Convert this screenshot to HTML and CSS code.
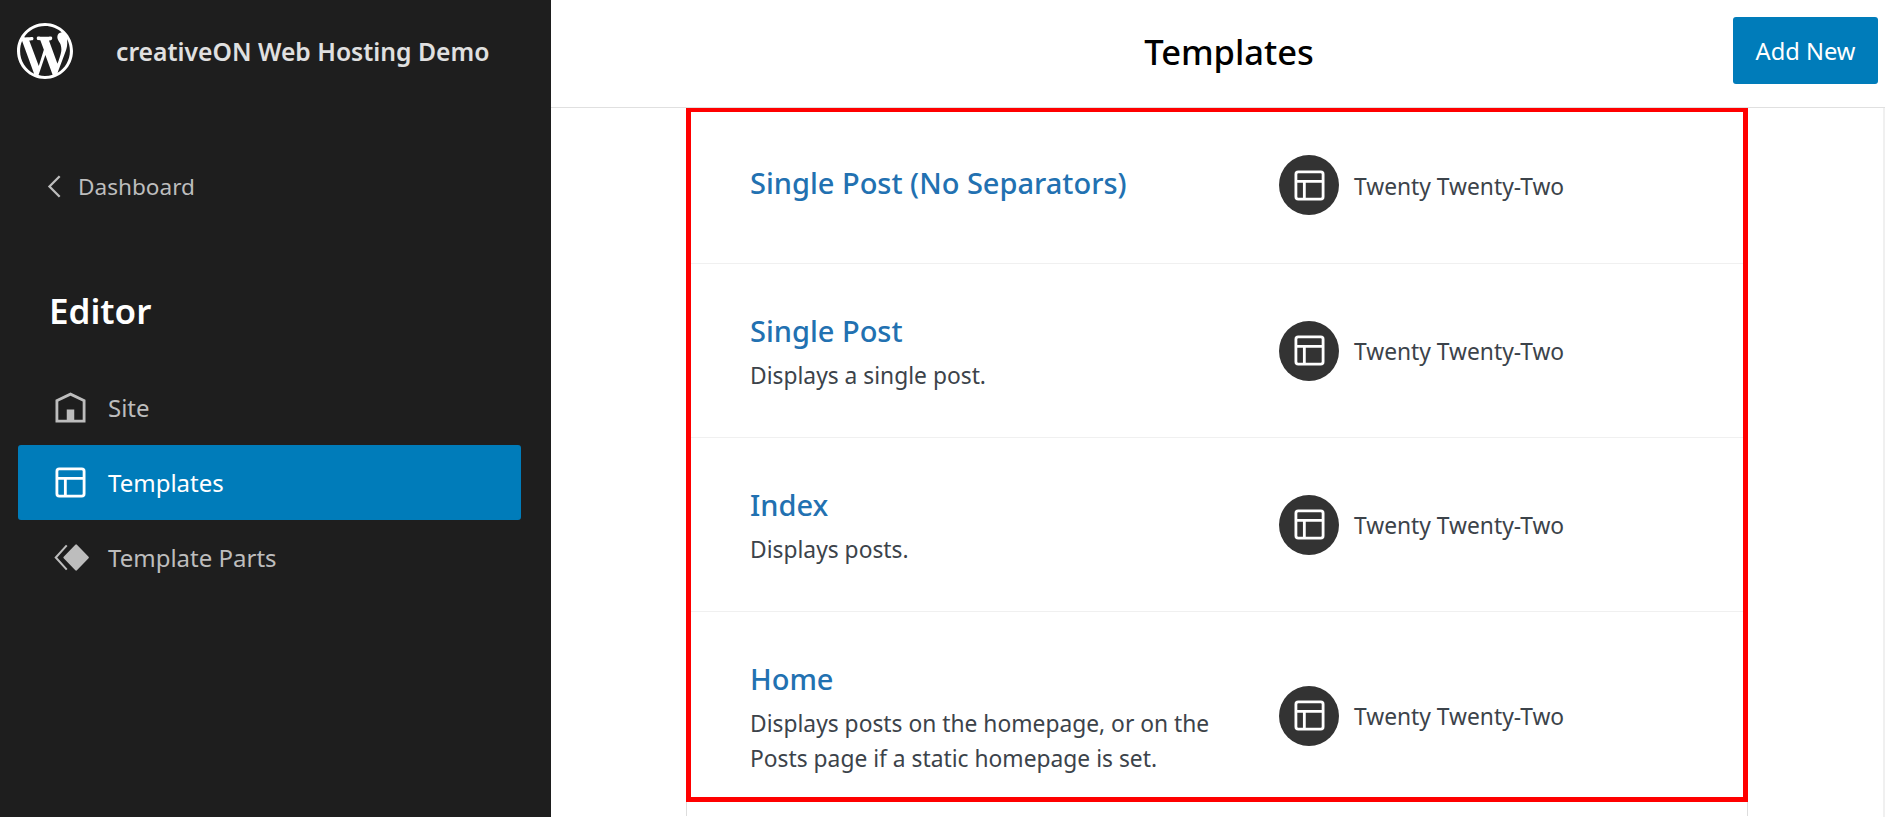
FILE: index.html
```html
<!DOCTYPE html>
<html lang="en">
<head>
    <meta charset="UTF-8">
    <meta name="viewport" content="width=device-width, initial-scale=1.0">
    <title>Templates</title>
    <link rel="stylesheet" href="styles.css">
</head>
<body>
    <svg class="icon-defs" width="0" height="0">
        <symbol id="icon-layout" viewBox="0 0 24 24">
            <path d="M18 5.5H6a.5.5 0 00-.5.5v3h13V6a.5.5 0 00-.5-.5zm.5 5H10v8h8a.5.5 0 00.5-.5v-7.5zm-10 0h-3V18a.5.5 0 00.5.5h2.5v-8zM6 4h12a2 2 0 012 2v12a2 2 0 01-2 2H6a2 2 0 01-2-2V6a2 2 0 012-2z"/>
        </symbol>
    </svg>

    <div class="app">
        <aside class="sidebar">
            <div class="site-head">
                <svg class="wp-logo" viewBox="0 0 20 20"><path d="M20 10c0-5.51-4.49-10-10-10C4.48 0 0 4.49 0 10c0 5.52 4.48 10 10 10 5.51 0 10-4.48 10-10zM7.78 15.37L4.37 6.22c.55-.02 1.17-.08 1.17-.08.5-.06.44-1.13-.06-1.11 0 0-1.45.11-2.37.11-.18 0-.37 0-.58-.01C4.12 2.69 6.87 1.11 10 1.11c2.33 0 4.45.87 6.05 2.34-.68-.11-1.65.39-1.65 1.58 0 .74.45 1.36.9 2.1.35.61.55 1.36.55 2.46 0 1.49-1.4 5-1.4 5l-3.03-8.37c.54-.02.82-.17.82-.17.5-.05.44-1.25-.06-1.22 0 0-1.44.12-2.38.12-.87 0-2.33-.12-2.33-.12-.5-.03-.56 1.2-.06 1.22l.92.08 1.26 3.41zM17.41 10c.24-.64.74-1.87.43-4.25.7 1.29 1.05 2.71 1.05 4.25 0 3.29-1.73 6.24-4.4 7.78.97-2.59 1.94-5.2 2.92-7.78zM6.1 18.09C3.12 16.65 1.11 13.53 1.11 10c0-1.3.23-2.48.72-3.59C3.25 10.3 4.67 14.2 6.1 18.09zm4.03-6.63l2.58 6.98c-.86.29-1.76.45-2.71.45-.79 0-1.57-.11-2.29-.33.81-2.38 1.62-4.74 2.42-7.1z"/></svg>
                <span class="site-name">creativeON Web Hosting Demo</span>
            </div>

            <a class="back-link" href="#">
                <svg class="back-icon" viewBox="0 0 14 22"><path d="M12 2L3 11l9 9"/></svg>
                Dashboard
            </a>

            <h2 class="side-title">Editor</h2>

            <nav class="side-nav">
                <a class="nav-item" href="#">
                    <svg class="nav-icon" viewBox="0 0 24 24"><path d="M12 4L4 7.9V20h16V7.9L12 4zm6.5 14.5H14V13h-4v5.5H5.5V8.8L12 5.7l6.5 3.1v9.7z"/></svg>
                    Site
                </a>
                <a class="nav-item active" href="#">
                    <svg class="nav-icon"><use href="#icon-layout"/></svg>
                    Templates
                </a>
                <a class="nav-item" href="#">
                    <svg class="nav-icon" viewBox="0 0 24 24"><path d="M15 5.6l6.2 6.4-6.2 6.4L8.8 12z" stroke="currentColor" stroke-width="1.2" stroke-linejoin="round"/><path d="M9.6 5.2L3.4 12l6.2 6.8.8-.7L4.9 12l5.5-6.1z"/></svg>
                    Template Parts
                </a>
            </nav>
        </aside>

        <main class="content">
            <header class="topbar">
                <h1>Templates</h1>
                <button class="add-btn">Add New</button>
            </header>

            <div class="list-area">
                <div class="table">
                    <div class="highlight">
                        <div class="row row-first">
                            <div class="row-info">
                                <a class="row-title" href="#">Single Post (No Separators)</a>
                            </div>
                            <div class="row-theme">
                                <span class="theme-badge"><svg class="badge-icon"><use href="#icon-layout"/></svg></span>
                                <span class="theme-name">Twenty Twenty-Two</span>
                            </div>
                        </div>
                        <div class="row">
                            <div class="row-info">
                                <a class="row-title" href="#">Single Post</a>
                                <p class="row-desc">Displays a single post.</p>
                            </div>
                            <div class="row-theme">
                                <span class="theme-badge"><svg class="badge-icon"><use href="#icon-layout"/></svg></span>
                                <span class="theme-name">Twenty Twenty-Two</span>
                            </div>
                        </div>
                        <div class="row">
                            <div class="row-info">
                                <a class="row-title" href="#">Index</a>
                                <p class="row-desc">Displays posts.</p>
                            </div>
                            <div class="row-theme">
                                <span class="theme-badge"><svg class="badge-icon"><use href="#icon-layout"/></svg></span>
                                <span class="theme-name">Twenty Twenty-Two</span>
                            </div>
                        </div>
                        <div class="row row-last">
                            <div class="row-info">
                                <a class="row-title" href="#">Home</a>
                                <p class="row-desc">Displays posts on the homepage, or on the Posts page if a static homepage is set.</p>
                            </div>
                            <div class="row-theme">
                                <span class="theme-badge"><svg class="badge-icon"><use href="#icon-layout"/></svg></span>
                                <span class="theme-name">Twenty Twenty-Two</span>
                            </div>
                        </div>
                    </div>
                </div>
            </div>
        </main>
    </div>
</body>
</html>
```

FILE: styles.css
```css
* {
    margin: 0;
    padding: 0;
    box-sizing: border-box;
}

html, body {
    height: 100%;
    overflow: hidden;
}

body {
    font-family: 'Noto Sans', 'Open Sans', Arial, sans-serif;
    background: #fff;
    color: #1e1e1e;
}

a {
    color: inherit;
    text-decoration: none;
}

.icon-defs {
    position: absolute;
}

.app {
    display: flex;
    height: 100vh;
}

/* Sidebar */
.sidebar {
    width: 551px;
    flex-shrink: 0;
    background: #1e1e1e;
    color: #bdbdbd;
    padding: 23px 18px 0;
}

.site-head {
    display: flex;
    align-items: center;
    height: 56px;
    margin-left: -1px;
}

.wp-logo {
    width: 56px;
    height: 56px;
    fill: #fff;
}

.site-name {
    margin-left: 43px;
    font-size: 24.7px;
    font-weight: 600;
    color: #e0e0e0;
}

.back-link {
    display: flex;
    align-items: center;
    margin: 91px 0 0 28px;
    height: 32px;
    font-size: 22.6px;
}

.back-icon {
    width: 16px;
    height: 25px;
    margin-right: 16px;
    fill: none;
    stroke: #bdbdbd;
    stroke-width: 2;
}

.side-title {
    margin: 85px 0 0 31px;
    height: 48px;
    line-height: 48px;
    font-size: 35px;
    font-weight: 600;
    color: #fff;
}

.side-nav {
    margin-top: 35px;
    width: 503px;
}

.nav-item {
    display: flex;
    align-items: center;
    height: 75px;
    padding-left: 30px;
    font-size: 24px;
    border-radius: 3px;
}

.nav-item.active {
    background: #007cba;
    color: #fff;
}

.nav-icon {
    width: 45px;
    height: 45px;
    margin-right: 15px;
    fill: currentColor;
}

/* Main area */
.content {
    flex: 1;
    display: flex;
    flex-direction: column;
    min-width: 0;
}

.topbar {
    position: relative;
    display: flex;
    align-items: center;
    justify-content: center;
    height: 108px;
    padding: 0 0 4px 22px;
    border-bottom: 1px solid #e0e0e0;
}

h1 {
    font-size: 34.5px;
    font-weight: 500;
    color: #000;
}

.add-btn {
    position: absolute;
    top: 17px;
    right: 7px;
    width: 145px;
    height: 67px;
    border: 0;
    border-radius: 3px;
    background: #007cba;
    color: #fff;
    font-family: inherit;
    font-size: 23.7px;
}

.list-area {
    flex: 1;
    padding-left: 135px;
    min-height: 0;
    border-right: 2px solid #f0f0f0;
}

.table {
    width: 1062px;
    height: 100%;
    border-left: 1px solid #ddd;
    border-right: 1px solid #ddd;
}

/* Red annotation round the rows */
.highlight {
    margin: -1px -1px 0 -1px;
    border: 5px solid #f00;
    height: 695px;
}

.row {
    display: flex;
    align-items: center;
    height: 174px;
    padding-left: 59px;
    border-bottom: 1px solid #f0f0f0;
}

.row-first {
    height: 152px;
}

.row-first .row-info {
    padding-top: 53px;
}

.row-first .row-theme {
    margin-bottom: 5px;
}

.row-last {
    height: 185px;
    border-bottom: 0;
}

.row-last .row-theme {
    margin-top: 22px;
}

.row-info {
    align-self: flex-start;
    width: 529px;
    flex-shrink: 0;
    padding-top: 49px;
}

.row-title {
    display: block;
    font-size: 29px;
    font-weight: 500;
    line-height: 36px;
    color: #2271b1;
}

.row-desc {
    max-width: 490px;
    margin-top: 9px;
    font-size: 22.8px;
    line-height: 35px;
    color: #3c434a;
}

.row-theme {
    display: flex;
    align-items: center;
    gap: 15px;
    font-size: 22.8px;
    color: #3c434a;
}

.theme-name {
    padding-top: 2px;
}

.theme-badge {
    display: flex;
    align-items: center;
    justify-content: center;
    width: 60px;
    height: 60px;
    border-radius: 50%;
    background: #333;
}

.badge-icon {
    width: 45px;
    height: 45px;
    fill: #fff;
}
```
